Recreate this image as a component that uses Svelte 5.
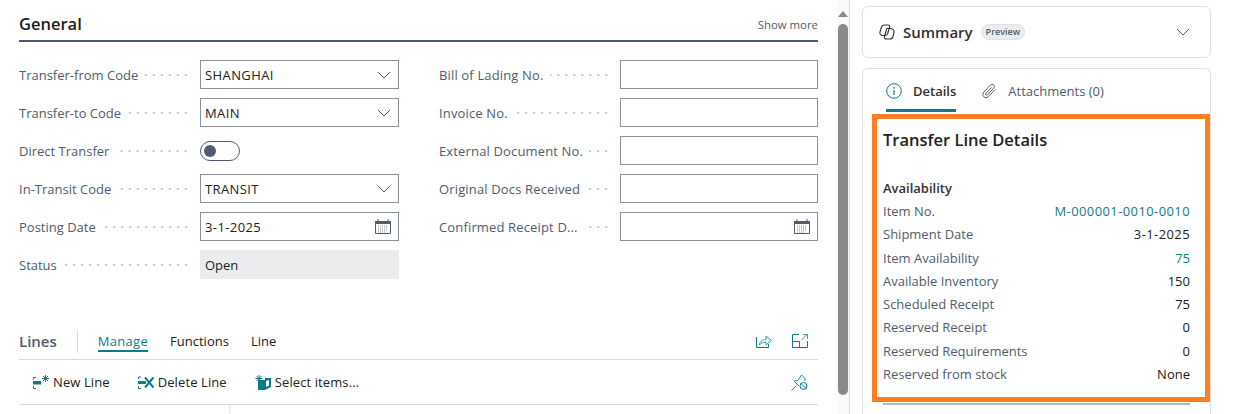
<script>
  const leftFields = [
    { label: 'Transfer-from Code', value: 'SHANGHAI', kind: 'select' },
    { label: 'Transfer-to Code', value: 'MAIN', kind: 'select' },
    { label: 'Direct Transfer', kind: 'toggle' },
    { label: 'In-Transit Code', value: 'TRANSIT', kind: 'select' },
    { label: 'Posting Date', value: '3-1-2025', kind: 'date' },
    { label: 'Status', value: 'Open', kind: 'readonly' }
  ];
  const rightFields = [
    { label: 'Bill of Lading No.', value: '', kind: 'text' },
    { label: 'Invoice No.', value: '', kind: 'text' },
    { label: 'External Document No.', value: '', kind: 'text' },
    { label: 'Original Docs Received', value: '', kind: 'text' },
    { label: 'Confirmed Receipt D...', value: '', kind: 'date' }
  ];
  const details = [
    { label: 'Item No.', value: 'M-000001-0010-0010', link: true, wide: true },
    { label: 'Shipment Date', value: '3-1-2025', wide: true },
    { label: 'Item Availability', value: '75', link: true },
    { label: 'Available Inventory', value: '150' },
    { label: 'Scheduled Receipt', value: '75' },
    { label: 'Reserved Receipt', value: '0' },
    { label: 'Reserved Requirements', value: '0' },
    { label: 'Reserved from stock', value: 'None' }
  ];
</script>

{#snippet field(f)}
  <div class="field">
    <span class="label">{f.label}</span>
    <span class="dots"></span>
    {#if f.kind === 'toggle'}
      <span class="control-slot"><span class="toggle"><span class="knob"></span></span></span>
    {:else}
      <div class="control" class:readonly={f.kind === 'readonly'}>
        <span class="value">{f.value}</span>
        {#if f.kind === 'select'}
          <svg class="chev" width="14" height="8" viewBox="0 0 14 8"><path d="M1 1l6 6 6-6" fill="none" stroke="#505c6d" stroke-width="1"/></svg>
        {:else if f.kind === 'date'}
          <svg class="cal" width="16" height="15" viewBox="0 0 16 15">
            <path d="M.5 2.500h15v12H.5z" fill="none" stroke="#505c6d"/>
            <path d="M0 2h16v3H0z" fill="#505c6d"/>
            <path d="M3 0v2M13 0v2" stroke="#505c6d"/>
            <path d="M3 7h10M3 9h10M3 11h10M3 13h7" stroke="#8a929d" stroke-dasharray="1 1"/>
          </svg>
        {/if}
      </div>
    {/if}
  </div>
{/snippet}

<div class="page">
  <main class="main">
    <section class="general">
      <header class="general-head">
        <h2>General</h2>
        <span class="show-more">Show more</span>
      </header>
      <div class="form">
        <div class="col">
          {#each leftFields as f}{@render field(f)}{/each}
        </div>
        <div class="col">
          {#each rightFields as f}{@render field(f)}{/each}
        </div>
      </div>
    </section>

    <section class="lines">
      <div class="tabs">
        <span class="lines-title">Lines</span>
        <span class="tabs-sep"></span>
        <span class="tab active">Manage</span>
        <span class="tab">Functions</span>
        <span class="tab">Line</span>
        <span class="tabs-icons">
          <svg width="16" height="14" viewBox="0 0 16 14" fill="none" stroke="#0f7b88">
            <path d="M.5 3v10.500h12V10"/>
            <path d="M3.500 11c0-3.500 3-5.500 6.500-5.500V2l5.500 4.500L10 11V8c-2.500 0-5 1-6.500 3z" stroke="#2a9aaa"/>
          </svg>
          <svg width="16" height="14" viewBox="0 0 16 14" fill="none" stroke="#0f7b88">
            <path d="M7 .5H.5v13h15V7"/>
            <path d="M.5 7.500h7v6"/>
            <path d="M9.500 6l5.500-5.500M11 .5h4.500V5" stroke="#2aa5b5"/>
          </svg>
        </span>
      </div>
      <div class="actions">
        <button class="action first">
          <svg width="17" height="15" viewBox="0 0 17 15" fill="none">
            <path d="M3 2.500H.5v2M.5 11v2.500H3" stroke="#0f7b88"/>
            <path d="M0 6h8v3.500H0z" fill="#0f7b88"/>
            <path d="M12.500 0v7M9 3.500h7M10 1l5 5M15 1l-5 5" stroke="#0f7b88"/>
          </svg>
          <span>New Line</span>
        </button>
        <button class="action">
          <svg width="16" height="13" viewBox="0 0 16 13" fill="none">
            <path d="M3 1H.5v2M.5 10v2.500H3" stroke="#0f7b88"/>
            <path d="M0 5h8v3H0z" fill="#0f7b88"/>
            <path d="M7 1.500l8.500 10M15.500 1.500l-8.500 10" stroke="#0f7b88" stroke-width="2"/>
          </svg>
          <span>Delete Line</span>
        </button>
        <button class="action">
          <svg width="16" height="15" viewBox="0 0 16 15" fill="none">
            <path d="M3 5h7v10H3z" fill="#0f7b88"/>
            <path d="M10 3h6v9l-6 3z" fill="#0f7b88"/>
            <path d="M11 6l3-1v5.500L11 12z" fill="#fff"/>
            <path d="M4 0v7M.5 3.500h7M1.500 1l5 5M6.500 1l-5 5" stroke="#0f7b88"/>
          </svg>
          <span>Select items...</span>
        </button>
        <svg class="pin" width="17" height="17" viewBox="0 0 17 17" fill="none" stroke="#1a93a3">
          <path d="M.5 16.500l5-5"/>
          <path d="M3 7l4-.5L10.500 1l4 4-1.500 2"/>
          <path d="M3 7l5 5"/>
          <circle cx="12.500" cy="12" r="3.500" stroke="#0f7b88"/>
          <path d="M10 9.500l5 5" stroke="#0f7b88"/>
        </svg>
      </div>
      <div class="grid-head"><span class="grid-col"></span></div>
    </section>
  </main>

  <div class="scrollbar">
    <span class="arrow"></span>
    <span class="thumb"></span>
  </div>

  <aside class="side">
    <div class="card summary">
      <svg width="17" height="16" viewBox="0 0 17 16" fill="none" stroke="#323130" stroke-width="1.100">
        <path d="M4 11.500c-2.500 0-3.500-1.500-3-3.500L2.500 3C3 1.500 4 1 5.500 1H9c1.500 0 2 1 1.500 2.500L8.500 10C8 11 7 11.500 6 11.500z"/>
        <path d="M8 4.500h3c2.500 0 4.500 1.500 4 4l-1 4c-.5 1.800-1.500 2.500-3 2.500H7.500C6 15 5 14 5.500 12.500L7.500 6c.2-1 .5-1.500 .5-1.500z"/>
      </svg>
      <span class="summary-title">Summary</span>
      <span class="badge">Preview</span>
      <svg class="summary-chev" width="14" height="8" viewBox="0 0 14 8"><path d="M1 1l6 6 6-6" fill="none" stroke="#505c6d"/></svg>
    </div>

    <div class="card details">
      <div class="detail-tabs">
        <span class="detail-tab selected">
          <svg width="16" height="16" viewBox="0 0 16 16" fill="none">
            <circle cx="8" cy="8" r="7.300" stroke="#0f7b88"/>
            <path d="M8 7v5" stroke="#0f7b88" stroke-width="1.200"/>
            <circle cx="8" cy="4.800" r=".9" fill="#0f7b88"/>
          </svg>
          Details
        </span>
        <span class="detail-tab">
          <svg width="15" height="16" viewBox="0 0 15 16" fill="none" stroke="#505c6d">
            <path d="M13 6.500l-6.500 7c-1.500 1.500-3.500 1.500-4.800.2s-1.200-3.200.2-4.700L8.500 2c1-1 2.400-1 3.300-.1s.9 2.300-.1 3.300L5.500 11.700c-.5.500-1.200.5-1.600.1s-.4-1.100.1-1.600L9.500 4.500"/>
          </svg>
          Attachments (0)
        </span>
      </div>
      <div class="detail-body">
        <h3>Transfer Line Details</h3>
        <h4>Availability</h4>
        {#each details as d}
          <div class="detail-row">
            <span class="detail-label">{d.label}</span>
            <span class="detail-value" class:link={d.link} class:wide={d.wide}>{d.value}</span>
          </div>
        {/each}
        <div class="detail-foot"></div>
      </div>
      <div class="highlight"></div>
    </div>
  </aside>
</div>

<style>
  :global(body) {
    margin: 0;
    background: #fff;
    overflow: hidden;
  }
  .page {
    display: flex;
    width: 1234px;
    height: 414px;
    overflow: hidden;
    font-family: "Open Sans", "Noto Sans", sans-serif;
    font-size: 13px;
    color: #212121;
  }
  .main {
    width: 799px;
    padding-left: 19px;
    padding-right: 16px;
    flex-shrink: 0;
    display: flex;
    flex-direction: column;
  }
  .general-head {
    height: 40px;
    display: flex;
    align-items: center;
    justify-content: space-between;
    border-bottom: 2px solid #505c6d;
  }
  .general-head h2 {
    margin: 7px 0 0;
    font-size: 16.500px;
    font-weight: 600;
    color: #212121;
  }
  .show-more {
    margin-top: 9px;
    font-size: 11.400px;
    color: #505c6d;
  }
  .form {
    display: grid;
    grid-template-columns: 380px 379px;
    column-gap: 40px;
    padding-top: 18px;
    height: 265px;
  }
  .col {
    display: flex;
    flex-direction: column;
    gap: 9px;
  }
  .field {
    display: flex;
    align-items: center;
    height: 29px;
  }
  .label {
    color: #505c6d;
    white-space: nowrap;
    margin-right: 6px;
    padding-top: 1px;
  }
  .col:last-child .label {
    letter-spacing: 0.15px;
  }
  .dots {
    flex: 1;
    height: 2px;
    margin-right: 10px;
    background-image: radial-gradient(circle, #c4c8cd 0.8px, transparent 1px);
    background-size: 8px 2px;
    background-position: right center;
    background-repeat: repeat-x;
  }
  .control {
    width: 199px;
    height: 29px;
    box-sizing: border-box;
    flex-shrink: 0;
    border: 1px solid #8a929d;
    display: flex;
    align-items: center;
    justify-content: space-between;
    padding: 0 7px 0 4px;
    background: #fff;
  }
  .col:last-child .control {
    width: 198px;
  }
  .control.readonly {
    border-color: #ebecee;
    background: #ebecee;
  }
  .value {
    color: #212121;
    padding-top: 1px;
    letter-spacing: 0.4px;
  }
  .readonly .value {
    letter-spacing: 0;
  }
  .control-slot {
    width: 199px;
    flex-shrink: 0;
  }
  .toggle {
    display: flex;
    align-items: center;
    width: 40px;
    height: 20px;
    box-sizing: border-box;
    border: 1px solid #505c6d;
    border-radius: 10px;
    padding-left: 3px;
  }
  .knob {
    width: 12px;
    height: 12px;
    border-radius: 50%;
    background: #505c6d;
  }
  .lines-title {
    font-size: 15px;
    font-weight: 600;
    color: #505c6d;
  }
  .tabs {
    display: flex;
    align-items: center;
    height: 32px;
    border-bottom: 1px solid #d7d8dc;
    padding-bottom: 2px;
  }
  .tabs-sep {
    width: 1px;
    height: 23px;
    background: #d7d8dc;
    margin: 0 20px 0 20px;
  }
  .tab {
    margin-right: 22px;
    color: #212121;
    line-height: 18px;
    border-bottom: 2px solid transparent;
    margin-top: 1px;
  }
  .tab.active {
    color: #0f7b88;
    border-bottom-color: #0f7b88;
    letter-spacing: 0.3px;
  }
  .tabs-icons {
    margin-left: auto;
    display: flex;
    align-items: center;
    gap: 20px;
    padding-right: 10px;
  }
  .actions {
    display: flex;
    align-items: center;
    height: 44px;
    padding-left: 14px;
    border-bottom: 1px solid #d7d8dc;
    gap: 28px;
  }
  .action {
    display: flex;
    align-items: center;
    gap: 4px;
    padding: 0;
    border: 0;
    background: none;
    font: inherit;
    color: #212121;
    letter-spacing: 0.1px;
  }
  .action.first {
    gap: 3px;
  }
  .pin {
    margin-left: auto;
    margin-right: 10px;
  }
  .grid-col {
    display: block;
    width: 210px;
    height: 10px;
    border-right: 2px solid #f0f0f2;
  }
  .scrollbar {
    width: 13px;
    margin-left: 3px;
    flex-shrink: 0;
    padding-top: 11px;
    display: flex;
    flex-direction: column;
    align-items: center;
    gap: 7px;
    border-right: 1px solid #e1e1e6;
    background: #fafafa;
    height: 414px;
    box-sizing: border-box;
  }
  .arrow {
    width: 0;
    height: 0;
    border-left: 5px solid transparent;
    border-right: 5px solid transparent;
    border-bottom: 6px solid #8a8a8a;
  }
  .thumb {
    width: 10px;
    height: 371px;
    border-radius: 5px;
    background: #8a8a8a;
    flex-shrink: 0;
  }
  .side {
    width: 349px;
    margin-left: 12px;
    padding-top: 6px;
    display: flex;
    flex-direction: column;
    gap: 10px;
    flex-shrink: 0;
  }
  .card {
    background: #fff;
    border: 1px solid #dfdfe6;
    border-radius: 6px;
    box-sizing: border-box;
  }
  .summary {
    height: 52px;
    display: flex;
    align-items: center;
    padding: 0 20px 0 16px;
    flex-shrink: 0;
  }
  .summary-title {
    margin-left: 7px;
    font-size: 15px;
    font-weight: 600;
    color: #323130;
  }
  .badge {
    margin-left: 8px;
    font-size: 9px;
    font-weight: 600;
    color: #505c6d;
    background: #ebecee;
    border: 1px solid #e0e1e5;
    border-radius: 8px;
    padding: 1px 4px;
    line-height: 12px;
  }
  .summary-chev {
    margin-left: auto;
  }
  .details {
    position: relative;
    height: 360px;
    flex-shrink: 0;
    border-bottom: 0;
    border-radius: 6px 6px 0 0;
  }
  .detail-tabs {
    display: flex;
    height: 44px;
    padding-left: 23px;
    gap: 26px;
  }
  .detail-tab {
    display: flex;
    align-items: center;
    gap: 11px;
    color: #505c6d;
    height: 43px;
    padding-top: 4px;
    border-bottom: 3px solid transparent;
    box-sizing: border-box;
  }
  .detail-tab.selected {
    font-weight: 600;
    color: #323130;
    border-bottom-color: #0f7b88;
  }
  .detail-body {
    padding: 15px 20px 0;
  }
  h3 {
    margin: 0 0 27px;
    font-size: 16.500px;
    line-height: 24px;
    font-weight: 600;
    color: #212121;
  }
  h4 {
    margin: 0 0 3px;
    font-size: 13px;
    line-height: 18px;
    font-weight: 600;
    color: #323130;
  }
  .detail-row {
    display: flex;
    justify-content: space-between;
    height: 23.300px;
    line-height: 23px;
  }
  .detail-label {
    color: #505c6d;
  }
  .detail-value {
    color: #212121;
  }
  .detail-value.wide {
    letter-spacing: 0.4px;
  }
  .detail-value.link {
    color: #0f7b88;
  }
  .detail-foot {
    height: 2px;
    margin-top: 17px;
    background: #b4b6ba;
  }
  /* orange annotation box drawn over the pane */
  .highlight {
    position: absolute;
    left: 9px;
    top: 45px;
    width: 338px;
    height: 288px;
    box-sizing: border-box;
    border: 5px solid #ff7f27;
    pointer-events: none;
  }
</style>
